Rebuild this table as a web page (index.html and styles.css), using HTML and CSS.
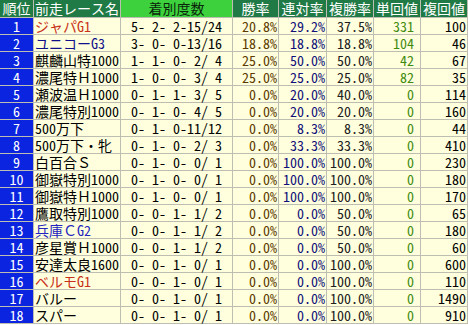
FILE: index.html
```html
<!DOCTYPE html>
<html lang="ja">
<head>
<meta charset="utf-8">
<link rel="stylesheet" href="styles.css">
</head>
<body>
<div class="tbl">
  <div class="h">順位</div><div class="h">前走レース名</div><div class="h hb">着別度数</div><div class="h">勝率</div><div class="h">連対率</div><div class="h">複勝率</div><div class="h">単回値</div><div class="h">複回値</div>

  <div class="rk">1</div><div class="nm red">ジャパG1</div><div class="ch">5- 2- 2-15/24</div><div class="n win">20.8%</div><div class="n ren">29.2%</div><div class="n fuk">37.5%</div><div class="n tan">331</div><div class="n fkv">100</div>
  <div class="rk">2</div><div class="nm navy">ユニコーG3</div><div class="ch">3- 0- 0-13/16</div><div class="n win">18.8%</div><div class="n ren">18.8%</div><div class="n fuk">18.8%</div><div class="n tan">104</div><div class="n fkv">46</div>
  <div class="rk">3</div><div class="nm">麒麟山特1000</div><div class="ch">1- 1- 0- 2/ 4</div><div class="n win">25.0%</div><div class="n ren">50.0%</div><div class="n fuk">50.0%</div><div class="n tan">42</div><div class="n fkv">67</div>
  <div class="rk">4</div><div class="nm">濃尾特Ｈ1000</div><div class="ch">1- 0- 0- 3/ 4</div><div class="n win">25.0%</div><div class="n ren">25.0%</div><div class="n fuk">25.0%</div><div class="n tan">82</div><div class="n fkv">35</div>
  <div class="rk">5</div><div class="nm">瀬波温Ｈ1000</div><div class="ch">0- 1- 1- 3/ 5</div><div class="n win">0.0%</div><div class="n ren">20.0%</div><div class="n fuk">40.0%</div><div class="n tan">0</div><div class="n fkv">114</div>
  <div class="rk">6</div><div class="nm">濃尾特別1000</div><div class="ch">0- 1- 0- 4/ 5</div><div class="n win">0.0%</div><div class="n ren">20.0%</div><div class="n fuk">20.0%</div><div class="n tan">0</div><div class="n fkv">160</div>
  <div class="rk">7</div><div class="nm">500万下</div><div class="ch">0- 1- 0-11/12</div><div class="n win">0.0%</div><div class="n ren">8.3%</div><div class="n fuk">8.3%</div><div class="n tan">0</div><div class="n fkv">44</div>
  <div class="rk">8</div><div class="nm">500万下・牝</div><div class="ch">0- 1- 0- 2/ 3</div><div class="n win">0.0%</div><div class="n ren">33.3%</div><div class="n fuk">33.3%</div><div class="n tan">0</div><div class="n fkv">410</div>
  <div class="rk">9</div><div class="nm">白百合Ｓ</div><div class="ch">0- 1- 0- 0/ 1</div><div class="n win">0.0%</div><div class="n ren">100.0%</div><div class="n fuk">100.0%</div><div class="n tan">0</div><div class="n fkv">230</div>
  <div class="rk">10</div><div class="nm">御嶽特別1000</div><div class="ch">0- 1- 0- 0/ 1</div><div class="n win">0.0%</div><div class="n ren">100.0%</div><div class="n fuk">100.0%</div><div class="n tan">0</div><div class="n fkv">180</div>
  <div class="rk">11</div><div class="nm">御嶽特Ｈ1000</div><div class="ch">0- 1- 0- 0/ 1</div><div class="n win">0.0%</div><div class="n ren">100.0%</div><div class="n fuk">100.0%</div><div class="n tan">0</div><div class="n fkv">170</div>
  <div class="rk">12</div><div class="nm">鷹取特別1000</div><div class="ch">0- 0- 1- 1/ 2</div><div class="n win">0.0%</div><div class="n ren">0.0%</div><div class="n fuk">50.0%</div><div class="n tan">0</div><div class="n fkv">65</div>
  <div class="rk">13</div><div class="nm blue">兵庫ＣG2</div><div class="ch">0- 0- 1- 1/ 2</div><div class="n win">0.0%</div><div class="n ren">0.0%</div><div class="n fuk">50.0%</div><div class="n tan">0</div><div class="n fkv">180</div>
  <div class="rk">14</div><div class="nm">彦星賞Ｈ1000</div><div class="ch">0- 0- 1- 1/ 2</div><div class="n win">0.0%</div><div class="n ren">0.0%</div><div class="n fuk">50.0%</div><div class="n tan">0</div><div class="n fkv">60</div>
  <div class="rk">15</div><div class="nm">安達太良1600</div><div class="ch">0- 0- 1- 0/ 1</div><div class="n win">0.0%</div><div class="n ren">0.0%</div><div class="n fuk">100.0%</div><div class="n tan">0</div><div class="n fkv">600</div>
  <div class="rk">16</div><div class="nm red">ベルモG1</div><div class="ch">0- 0- 1- 0/ 1</div><div class="n win">0.0%</div><div class="n ren">0.0%</div><div class="n fuk">100.0%</div><div class="n tan">0</div><div class="n fkv">110</div>
  <div class="rk">17</div><div class="nm">バルー</div><div class="ch">0- 0- 1- 0/ 1</div><div class="n win">0.0%</div><div class="n ren">0.0%</div><div class="n fuk">100.0%</div><div class="n tan">0</div><div class="n fkv">1490</div>
  <div class="rk">18</div><div class="nm">スパー</div><div class="ch">0- 0- 1- 0/ 1</div><div class="n win">0.0%</div><div class="n ren">0.0%</div><div class="n fuk">100.0%</div><div class="n tan">0</div><div class="n fkv">910</div>
</div>
</body>
</html>
```

FILE: styles.css
```css
html, body {
  margin: 0;
  padding: 0;
  background: #ffffff;
}

.tbl {
  display: grid;
  grid-template-columns: 33px 86px 111px 45px 47px 46px 46px 46px;
  grid-template-rows: 17px;
  grid-auto-rows: 16px;
  gap: 1px;
  width: 467px;
  padding: 0 1px 1px 0;
  background: #bdbdb2;
  font-family: "Noto Sans Mono CJK JP", "Noto Sans CJK JP", "Liberation Mono", monospace;
  font-size: 14px;
  line-height: 16px;
  color: #000000;
}

.tbl > div {
  white-space: pre;
  background: #ffffdd;
}

.h {
  background: #1f7a45 !important;
  color: #ffffff;
  text-align: center;
  line-height: 17px;
}

.hb {
  background: #3dd23d !important;
  color: #0a250a;
}

.rk {
  background: #0a24e0 !important;
  color: #ffffff;
  text-align: center;
}

.nm {
  padding-left: 1px;
}

.ch {
  text-align: center;
}

.n {
  text-align: right;
  padding-right: 1px;
}

.win { color: #5c3a00; }
.ren { color: #10107a; }
.fuk { color: #202020; }
.tan { color: #3f8a10; padding-right: 6px; }
.fkv { color: #000000; }

.red { color: #c83218; }
.navy { color: #10108a; }
.blue { color: #2424c0; }
```
